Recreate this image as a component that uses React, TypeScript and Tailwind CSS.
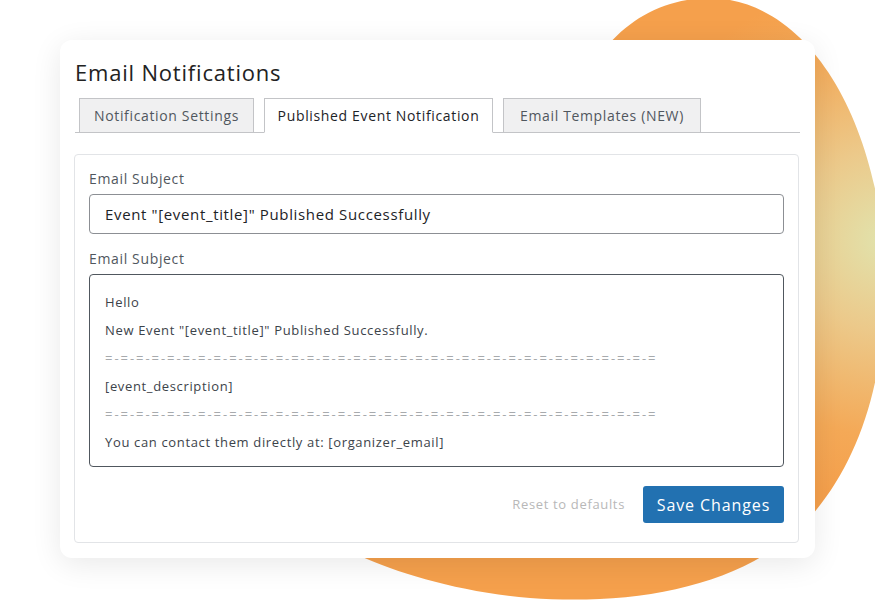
import { useState } from 'react';

const tabs = [
  { label: 'Notification Settings', width: 'w-[175px]' },
  { label: 'Published Event Notification', width: 'w-[229px]' },
  { label: 'Email Templates (NEW)', width: 'w-[198px]' },
];

const divider = '=-'.repeat(35) + '=';

const bodyLines = [
  { text: 'Hello' },
  { text: 'New Event "[event_title]" Published Successfully.' },
  { text: divider, muted: true },
  { text: '[event_description]' },
  { text: divider, muted: true },
  { text: 'You can contact them directly at: [organizer_email]' },
];

function Blob() {
  return (
    <svg className="absolute inset-0" width="875" height="600" viewBox="0 0 875 600">
      <defs>
        <radialGradient id="blobFill" cx="885" cy="240" r="260" gradientUnits="userSpaceOnUse">
          <stop offset="0" stopColor="#e1e3ad" />
          <stop offset="0.35" stopColor="#ecc98a" />
          <stop offset="0.75" stopColor="#f4a957" />
          <stop offset="1" stopColor="#f5a04c" />
        </radialGradient>
      </defs>
      <path
        d="M360 556 C 450 470, 515 300, 555 150 C 585 50, 635 0, 708 -2 C 800 -2, 866 100, 882 230 C 894 350, 868 450, 812 515 C 752 585, 640 606, 530 598 C 460 592, 400 574, 360 556 Z"
        fill="url(#blobFill)"
      />
    </svg>
  );
}

export default function App() {
  const [active, setActive] = useState(1);

  return (
    <div className="relative w-[875px] h-[600px] overflow-hidden bg-white font-['Open_Sans',sans-serif] tracking-[0.65px]">
      <Blob />
      <div className="relative pt-[40px] pl-[60px]">
        <div className="w-[755px] h-[518px] bg-white rounded-[12px] shadow-[0_6px_30px_rgba(0,0,0,0.09)] pt-[18px]">
          <h1 className="pl-[15px] text-[22px] leading-[28px] tracking-[0.8px] text-[#222]">Email Notifications</h1>

          <div className="ml-[15px] mt-[12px] w-[725px] h-[35px] flex items-end gap-[10px] pl-[4px] border-b border-[#c3c4c7]">
            {tabs.map((tab, i) => (
              <button
                key={tab.label}
                onClick={() => setActive(i)}
                className={`${tab.width} h-[35px] -mb-px border border-[#c3c4c7] text-[14px] ${
                  i === active
                    ? 'bg-white border-b-white text-[#1d2327] font-medium'
                    : 'bg-[#f0f0f1] text-[#50575e]'
                }`}
              >
                {tab.label}
              </button>
            ))}
          </div>

          <div className="ml-[14px] mt-[21px] w-[725px] h-[389px] border border-[#e2e4e7] rounded-[4px] px-[14px] pt-[14px]">
            <label className="block text-[14px] leading-[20px] text-[#50575e]">Email Subject</label>
            <div className="mt-[5px] h-[40px] flex items-center px-[15px] border border-[#8c8f94] rounded-[4px] text-[15px] text-[#1d2327]">
              Event "[event_title]" Published Successfully
            </div>

            <label className="block mt-[15px] text-[14px] leading-[20px] text-[#50575e]">Email Subject</label>
            <div className="mt-[5px] h-[193px] pt-[13px] px-[15px] border border-[#50575e] rounded-[4px] text-[13px] leading-[28px] text-[#3c434a]">
              {bodyLines.map((line, i) => (
                <div key={i} className={line.muted ? 'text-[#a7aaad] tracking-[1.95px]' : ''}>
                  {line.text}
                </div>
              ))}
            </div>

            <div className="mt-[19px] flex items-center justify-end gap-[18px]">
              <button className="text-[13px] text-[#b8b8b8]">Reset to defaults</button>
              <button className="w-[141px] h-[37px] rounded-[3px] bg-[#2271b1] text-[16px] tracking-[0.9px] text-white">Save Changes</button>
            </div>
          </div>
        </div>
      </div>
    </div>
  );
}
